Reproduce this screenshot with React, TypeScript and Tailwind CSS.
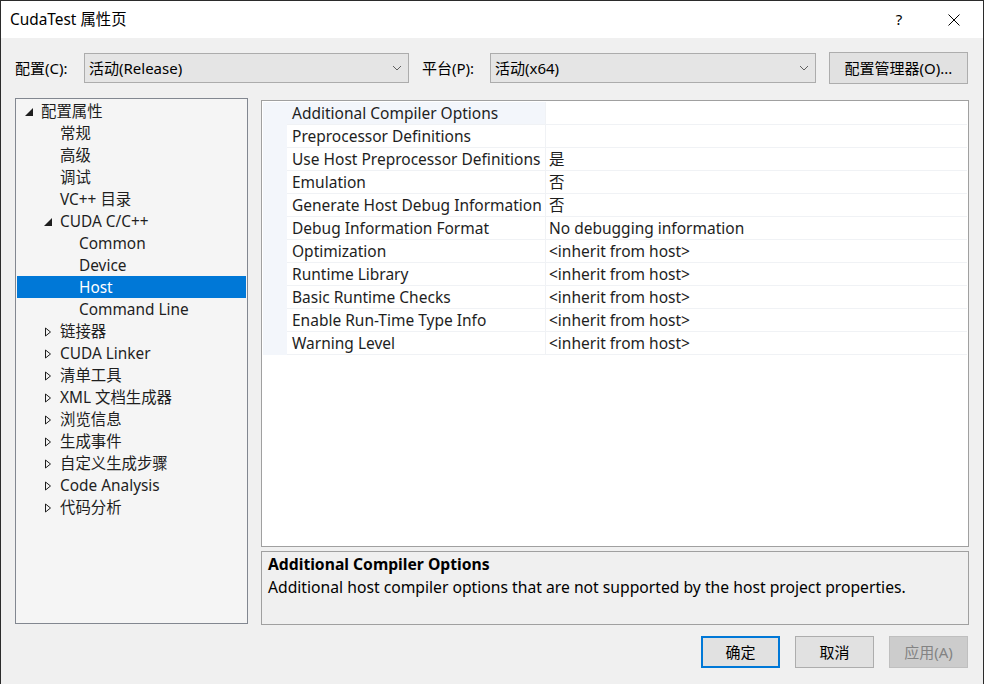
import { FC } from 'react';

const font = { fontFamily: '"Noto Sans", "Noto Sans CJK SC", sans-serif' };

type TreeNode = {
  label: string;
  level: number;
  arrow?: 'open' | 'closed';
  selected?: boolean;
};

const tree: TreeNode[] = [
  { label: '配置属性', level: 0, arrow: 'open' },
  { label: '常规', level: 1 },
  { label: '高级', level: 1 },
  { label: '调试', level: 1 },
  { label: 'VC++ 目录', level: 1 },
  { label: 'CUDA C/C++', level: 1, arrow: 'open' },
  { label: 'Common', level: 2 },
  { label: 'Device', level: 2 },
  { label: 'Host', level: 2, selected: true },
  { label: 'Command Line', level: 2 },
  { label: '链接器', level: 1, arrow: 'closed' },
  { label: 'CUDA Linker', level: 1, arrow: 'closed' },
  { label: '清单工具', level: 1, arrow: 'closed' },
  { label: 'XML 文档生成器', level: 1, arrow: 'closed' },
  { label: '浏览信息', level: 1, arrow: 'closed' },
  { label: '生成事件', level: 1, arrow: 'closed' },
  { label: '自定义生成步骤', level: 1, arrow: 'closed' },
  { label: 'Code Analysis', level: 1, arrow: 'closed' },
  { label: '代码分析', level: 1, arrow: 'closed' },
];

const props: [string, string][] = [
  ['Additional Compiler Options', ''],
  ['Preprocessor Definitions', ''],
  ['Use Host Preprocessor Definitions', '是'],
  ['Emulation', '否'],
  ['Generate Host Debug Information', '否'],
  ['Debug Information Format', 'No debugging information'],
  ['Optimization', '<inherit from host>'],
  ['Runtime Library', '<inherit from host>'],
  ['Basic Runtime Checks', '<inherit from host>'],
  ['Enable Run-Time Type Info', '<inherit from host>'],
  ['Warning Level', '<inherit from host>'],
];

const Arrow: FC<{ kind: 'open' | 'closed' }> = ({ kind }) =>
  kind === 'open' ? (
    <svg width="8" height="8" viewBox="0 0 8 8">
      <path d="M8 0 L8 8 L0 8 Z" fill="#1e1e1e" />
    </svg>
  ) : (
    <svg width="8" height="10" viewBox="0 0 8 10">
      <path d="M1.5 1 L6.5 5 L1.5 9 Z" fill="none" stroke="#1e1e1e" strokeWidth="1" />
    </svg>
  );

const Chevron = () => (
  <svg width="10" height="6" viewBox="0 0 10 6">
    <path d="M1 1 L5 5 L9 1" fill="none" stroke="#606060" strokeWidth="1" />
  </svg>
);

const Select: FC<{ value: string; width: string }> = ({ value, width }) => (
  <div
    className={`flex h-[30px] items-center justify-between border border-[#acacac] bg-[#e5e5e5] pl-[4px] pr-[6px] ${width}`}
  >
    <span className="text-[15px] text-black">{value}</span>
    <Chevron />
  </div>
);

export default function App() {
  return (
    <div
      className="flex h-[684px] w-[984px] flex-col overflow-hidden border-x border-t border-[#2b2b2b] bg-[#f0f0f0] text-[#1e1e1e]"
      style={font}
    >
      {/* title bar */}
      <div className="flex h-[37px] shrink-0 items-center justify-between bg-white pl-[9px]">
        <span className="text-[15.4px] text-black">CudaTest 属性页</span>
        <div className="flex items-center">
          <span className="w-[56px] text-center text-[15px] text-black">?</span>
          <div className="flex w-[56px] justify-center pr-[2px]">
            <svg width="12" height="12" viewBox="0 0 12 12">
              <path d="M0.5 0.5 L11.5 11.5 M11.5 0.5 L0.5 11.5" stroke="#000" strokeWidth="1" />
            </svg>
          </div>
        </div>
      </div>

      {/* config row */}
      <div className="mt-[14px] flex h-[32px] shrink-0 items-center pl-[14px]">
        <span className="w-[69px] text-[15px] text-black">配置(C):</span>
        <Select value="活动(Release)" width="w-[325px]" />
        <span className="ml-[13px] w-[68px] text-[15px] text-black">平台(P):</span>
        <Select value="活动(x64)" width="w-[326px]" />
        <button className="ml-[13px] h-[32px] w-[139px] border border-[#adadad] bg-[#e1e1e1] text-[15px] text-black">
          配置管理器(O)...
        </button>
      </div>

      {/* main area */}
      <div className="mt-[14px] flex h-[527px] shrink-0 pl-[14px]">
        {/* tree */}
        <div className="h-[526px] w-[233px] border border-[#828790] bg-[#f5f5f5] px-[1px] pt-[1px]">
          {tree.map((n) => (
            <div
              key={n.label}
              className={`flex h-[22px] items-center pt-[2px] text-[15.4px] ${
                n.selected ? 'bg-[#0078d7] text-white' : 'text-[#1e1e1e]'
              }`}
            >
              <div
                className={`flex shrink-0 items-center ${
                  n.level === 0 ? 'w-[23px] pl-[8px]' : n.level === 1 ? 'w-[42px] pl-[27px]' : 'w-[61px]'
                }`}
              >
                {n.arrow && <Arrow kind={n.arrow} />}
              </div>
              <span className="ml-[1px] whitespace-nowrap">{n.label}</span>
            </div>
          ))}
        </div>

        {/* right side */}
        <div className="ml-[13px] flex w-[708px] flex-col">
          <div className="mt-[2px] h-[447px] border border-[#a0a0a0] bg-white p-[1px]">
            {props.map(([name, value], i) => (
              <div key={name} className="flex h-[23px]">
                <div className="w-[24px] shrink-0 bg-[#f3f6fb]" />
                <div
                  className={`flex w-[259px] shrink-0 items-center border-b border-r border-[#f0f2f5] pt-[2px] pl-[5px] text-[15.5px] whitespace-nowrap text-[#1e1e1e] ${
                    i === 0 ? 'bg-[#f3f6fb]' : ''
                  }`}
                >
                  {name}
                </div>
                <div className="flex flex-1 items-center border-b border-[#f0f2f5] pt-[2px] pl-[3px] text-[15.5px] whitespace-nowrap text-[#1e1e1e]">
                  {value}
                </div>
              </div>
            ))}
          </div>
          <div className="mt-[4px] h-[74px] border border-[#a0a0a0] bg-[#f0f0f0] px-[6px] pt-[1px]">
            <div className="text-[15.7px] leading-[23px] font-bold text-black">Additional Compiler Options</div>
            <div className="text-[15.7px] leading-[23px] text-black">
              Additional host compiler options that are not supported by the host project properties.
            </div>
          </div>
        </div>
      </div>

      {/* buttons */}
      <div className="mt-[11px] flex justify-end gap-[15px] pr-[15px]">
        <button className="h-[32px] w-[79px] border-2 border-[#0078d7] bg-[#e1e1e1] text-[15px] text-black">确定</button>
        <button className="h-[32px] w-[79px] border border-[#adadad] bg-[#e1e1e1] text-[15px] text-black">取消</button>
        <button className="h-[32px] w-[79px] border border-[#bfbfbf] bg-[#cccccc] text-[15px] text-[#838383]">
          应用(A)
        </button>
      </div>
    </div>
  );
}
